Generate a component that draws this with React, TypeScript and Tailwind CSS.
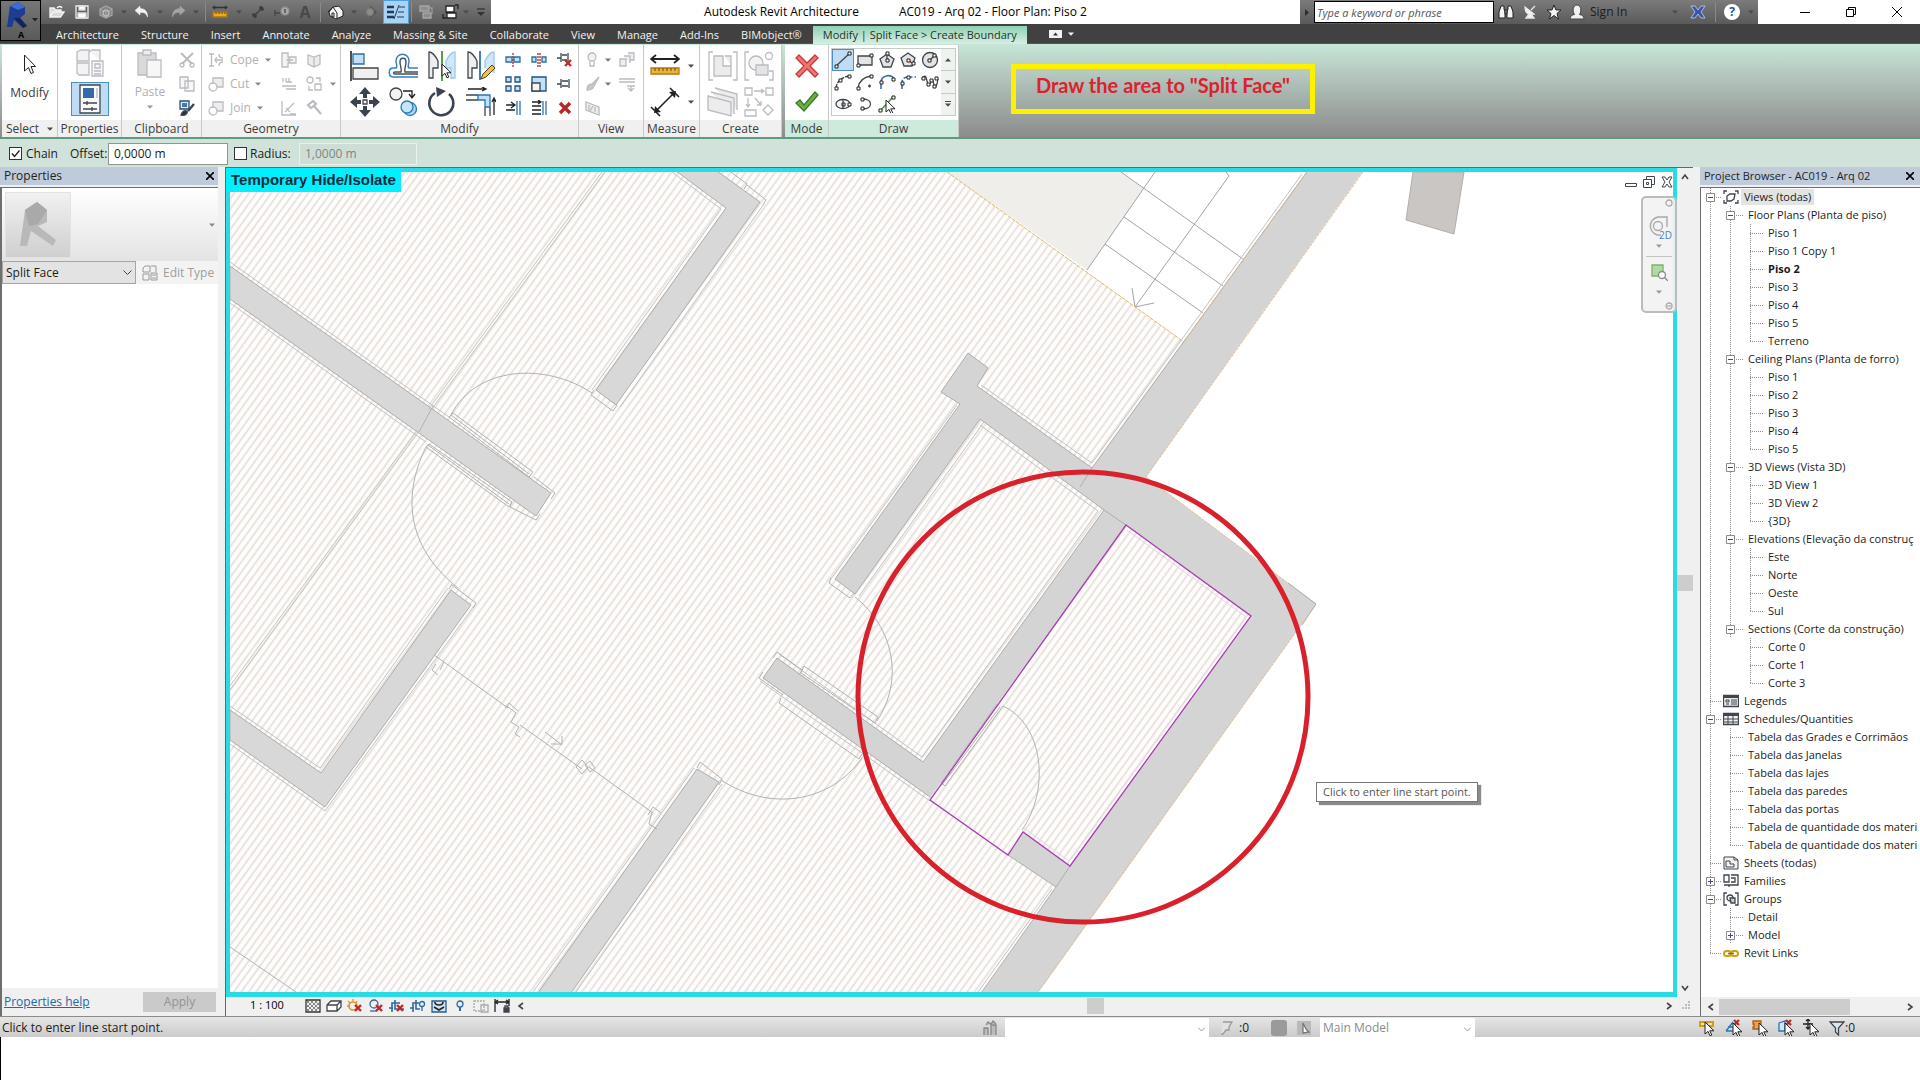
import type { ReactNode } from "react";

type IconProps = { w: number; h: number; children: ReactNode };

const Ico = ({ w, h, children }: IconProps) => (
  <svg width={w} height={h} viewBox={`0 0 ${w} ${h}`} fill="none" stroke="#3f4650" strokeWidth="1.3" className="shrink-0">
    {children}
  </svg>
);

const Caret = ({ color = "#4a4a4a" }: { color?: string }) => (
  <svg width="6" height="4" viewBox="0 0 6 4" className="shrink-0">
    <path d="M0 0.5h6L3 3.8z" fill={color} />
  </svg>
);

const RedX = ({ x, y, s }: { x: number; y: number; s: number }) => (
  <path d={`M${x} ${y}l${s} ${s}m0 ${-s}l${-s} ${s}`} stroke="#c02a2a" strokeWidth="2.4" />
);

const Cursor = ({ x, y }: { x: number; y: number }) => (
  <path transform={`translate(${x} ${y})`} d="M0 0v12l3-2.6 2 4.4 1.8-.8-2-4.2H9z" fill="#fff" stroke="#222" strokeWidth="1" />
);

// ---------- title bar ----------

const quickAccess: { name: string; width: string; icon: ReactNode; active?: boolean }[] = [
  {
    name: "Open",
    width: "w-6",
    icon: (
      <Ico w={16} h={14}>
        <path d="M1 12V3h4l1.500 2H12v2M1 12l3-5h11l-3.500 5z" fill="#d8d8d8" stroke="#f4f4f4" />
        <path d="M8 3c2-2 4-2 5 0" stroke="#fff" />
      </Ico>
    ),
  },
  {
    name: "Save",
    width: "w-[26px]",
    icon: (
      <Ico w={14} h={14}>
        <path d="M1 1h12v12H1z" fill="#5a5f68" stroke="#f0f0f0" />
        <path d="M4 1h6v4H4zM3 8h8v5H3z" fill="#fff" stroke="#ddd" />
      </Ico>
    ),
  },
  {
    name: "Synchronize",
    width: "w-[22px]",
    icon: (
      <Ico w={16} h={14}>
        <path d="M2 4l6-3 6 3v6l-6 3-6-3zM2 4l6 3 6-3M8 7v6" stroke="#a4a4a4" fill="#858585" />
        <circle cx="8" cy="8" r="3" stroke="#bbb" />
      </Ico>
    ),
  },
  { name: "Synchronize options", width: "w-[14px]", icon: <Caret /> },
  {
    name: "Undo",
    width: "w-[22px]",
    icon: (
      <Ico w={16} h={14}>
        <path d="M6 1L1 5.500 6 10V7.500c4-.5 6 .5 7.500 4.500C14 7 11 3.500 6 3.500z" fill="#f2f2f2" stroke="#f2f2f2" strokeWidth="0.5" />
      </Ico>
    ),
  },
  { name: "Undo list", width: "w-[14px]", icon: <Caret /> },
  {
    name: "Redo",
    width: "w-[22px]",
    icon: (
      <Ico w={16} h={14}>
        <path d="M10 1l5 4.500L10 10V7.500C6 7 4 8 2.500 12 2 7 5 3.500 10 3.500z" fill="#a5a5a5" stroke="#a5a5a5" strokeWidth="0.5" />
      </Ico>
    ),
  },
  { name: "Redo list", width: "w-[14px]", icon: <Caret /> },
  { name: "", width: "w-1", icon: null },
  {
    name: "Measure",
    width: "w-[26px]",
    icon: (
      <Ico w={16} h={14}>
        <path d="M1 2.500h14M3 1L1 2.500 3 4M13 1l2 1.500L13 4" stroke="#333" />
        <path d="M1 7h14v5H1z" fill="#e9a927" stroke="#a97412" />
        <path d="M4 7v2M7 7v2M10 7v2M13 7v2" stroke="#8a5d08" />
      </Ico>
    ),
  },
  { name: "Measure options", width: "w-3", icon: <Caret /> },
  {
    name: "Aligned Dimension",
    width: "w-[26px]",
    icon: (
      <Ico w={14} h={14}>
        <path d="M2 12L12 2M1 9l4 4M9 1l4 4M3 8v3h3M8 3h3v3" stroke="#3c3c3c" />
      </Ico>
    ),
  },
  {
    name: "Tag by Category",
    width: "w-[22px]",
    icon: (
      <Ico w={16} h={14}>
        <path d="M1 5v6M1 8h5" stroke="#444" />
        <circle cx="11" cy="6" r="4" fill="#a8a8a8" stroke="#8f8f8f" />
        <path d="M11 4v4" stroke="#444" />
      </Ico>
    ),
  },
  {
    name: "Text",
    width: "w-6",
    icon: <span className="text-[16px] font-bold leading-4 text-[#484848]">A</span>,
  },
  { name: "", width: "w-[6px]", icon: null },
  {
    name: "Default 3D View",
    width: "w-[26px]",
    icon: (
      <Ico w={16} h={15}>
        <path d="M1 7l4-5 6-1 4 5v5l-7 3-6-3z" fill="#f4f4f4" stroke="#222" strokeWidth="1" />
        <path d="M0 7l5-5 4 6v6M4 8h2v4H4z" stroke="#222" strokeWidth="1" />
      </Ico>
    ),
  },
  { name: "3D options", width: "w-[10px]", icon: <Caret /> },
  {
    name: "Section",
    width: "w-6",
    icon: (
      <Ico w={14} h={14}>
        <path d="M7 2l5 5-5 5z" fill="#555" stroke="#555" />
        <circle cx="6" cy="7" r="3.500" fill="#8c8c8c" stroke="#7b7b7b" />
      </Ico>
    ),
  },
  {
    name: "Thin Lines",
    width: "w-[26px]",
    active: true,
    icon: (
      <Ico w={18} h={16}>
        <path d="M0 3h7M0 8h7M0 13h7" stroke="#223a55" strokeWidth="2.400" />
        <path d="M7 15L12 1M12 3h6M11 8h6M10 13h7" stroke="#223a55" strokeWidth="1" />
      </Ico>
    ),
  },
  { name: "", width: "w-1", icon: null },
  {
    name: "Close Hidden Windows",
    width: "w-[26px]",
    icon: (
      <Ico w={14} h={14}>
        <path d="M1 1h9v5H1zM4 8h8v5H4z" fill="#8d8d8d" stroke="#a8a8a8" />
        <path d="M8 3h5v6" stroke="#9c9c9c" />
      </Ico>
    ),
  },
  {
    name: "Switch Windows",
    width: "w-[22px]",
    icon: (
      <Ico w={17} h={16}>
        <path d="M4 2h8v6H4zM5 9h9v5H5z" fill="#fff" stroke="#222" />
        <path d="M1 10v4h3M13 1h3v4" stroke="#222" />
      </Ico>
    ),
  },
  { name: "Switch options", width: "w-[10px]", icon: <Caret /> },
  {
    name: "Customize Quick Access Toolbar",
    width: "w-5",
    icon: (
      <Ico w={8} h={8}>
        <path d="M0 1h8" stroke="#333" />
        <path d="M0 4h8L4 8z" fill="#333" stroke="none" />
      </Ico>
    ),
  },
];

function TitleBar() {
  return (
    <header className="flex h-6 shrink-0 bg-white text-[12px]">
      <div className="flex items-center bg-linear-to-b from-[#7b7b7b] to-[#5a5a5a] pl-[45px]">
        {quickAccess.map((q, i) =>
          q.icon ? (
            <button
              key={i}
              aria-label={q.name}
              className={`${q.width} flex h-6 items-center justify-center ${q.active ? "border border-[#4fa0dc] bg-[#a9d3f5]" : ""}`}
            >
              {q.icon}
            </button>
          ) : (
            <span key={i} className={`${q.width} flex h-5 justify-center`}>
              <span className="w-px bg-[#8a8a8a]" />
            </span>
          )
        )}
      </div>

      <div className="flex flex-1 items-center justify-center gap-10 whitespace-nowrap text-black">
        <span>Autodesk Revit Architecture</span>
        <span>AC019 - Arq 02 - Floor Plan: Piso 2</span>
      </div>

      <div className="flex w-[458px] items-center bg-linear-to-b from-[#7b7b7b] to-[#5a5a5a]">
        <button aria-label="Collapse search" className="flex w-[14px] justify-center">
          <svg width="4" height="7" viewBox="0 0 4 7"><path d="M0 0l4 3.500L0 7z" fill="#2c2c2c" /></svg>
        </button>
        <input
          aria-label="Search"
          placeholder="Type a keyword or phrase"
          className="h-[22px] w-[180px] border border-black bg-white px-[2px] text-[11px] italic placeholder:text-[#555]"
        />
        <button aria-label="Find" className="flex w-6 justify-center">
          <Ico w={16} h={16}>
            <path d="M3 2h3v3l1 3v6H1V8zM13 2h-3v3L9 8v6h6V8zM7 6h2v4H7z" fill="#f4f4f4" stroke="#222" strokeWidth="1" />
          </Ico>
        </button>
        <button aria-label="Communication Center" className="flex w-6 justify-center">
          <Ico w={14} h={16}>
            <path d="M2 3c0 6 3 8 9 7zM6 10l-3 4h8l-3-4M8 6l4-4" fill="#f4f4f4" stroke="#e8e8e8" />
          </Ico>
        </button>
        <button aria-label="Favorites" className="flex w-6 justify-center">
          <Ico w={16} h={16}>
            <path d="M8 1l2 5h5l-4 3.500L12.500 15 8 11.500 3.500 15 5 9.500 1 6h5z" fill="#f4f4f4" stroke="#222" strokeWidth="1" />
          </Ico>
        </button>
        <button className="flex items-center gap-[5px] pl-[3px] text-[#1c1c1c]">
          <Ico w={16} h={16}>
            <path d="M1 15c0-3 2-4 4.500-4.500C3 7 4 1 8 1s5 6 2.500 9.500C13 11 15 12 15 15z" fill="#f0f0f0" stroke="#444" strokeWidth="1" />
          </Ico>
          Sign In
        </button>
        <span className="flex flex-1 justify-end pr-2"><Caret /></span>
        <button aria-label="Exchange Apps" className="flex w-6 justify-center">
          <Ico w={16} h={14}>
            <path d="M1 1h4l3 4 3-4h4l-4 6 4 6h-4L8 9l-3 4H1l4-6z" fill="#3a55a8" stroke="#c5d3f3" strokeWidth="0.800" />
          </Ico>
        </button>
        <span className="ml-[5px] h-5 w-px bg-[#8a8a8a]" />
        <button aria-label="Help" className="flex w-8 justify-center">
          <span className="flex h-4 w-4 items-center justify-center rounded-full bg-white text-[12px] font-bold text-[#27509c]">?</span>
        </button>
        <span className="pr-1"><Caret /></span>
      </div>

      <div className="flex pl-[24px]">
        <button aria-label="Minimize" className="flex w-[46px] items-center justify-center">
          <Ico w={10} h={10}><path d="M0 5.500h10" stroke="#000" strokeWidth="1" /></Ico>
        </button>
        <button aria-label="Restore" className="flex w-[46px] items-center justify-center">
          <Ico w={10} h={10}><path d="M0.500 2.500h7v7h-7zM2.500 2.500v-2h7v7h-2" stroke="#000" strokeWidth="1" /></Ico>
        </button>
        <button aria-label="Close" className="flex w-[46px] items-center justify-center">
          <Ico w={10} h={10}><path d="M0 0l10 10M10 0L0 10" stroke="#000" strokeWidth="1" /></Ico>
        </button>
      </div>
    </header>
  );
}

const tabs = ["Architecture", "Structure", "Insert", "Annotate", "Analyze", "Massing & Site", "Collaborate", "View", "Manage", "Add-Ins", "BIMobject®"];

function TabBar() {
  return (
    <nav className="flex h-5 shrink-0 items-stretch border-b border-[#2f6b4f] bg-[#414141] pl-[45px] text-[11px] text-[#f2f2f2]">
      {tabs.map((t) => (
        <button key={t} className="whitespace-nowrap px-[11px] pt-[2px] leading-4">{t}</button>
      ))}
      <button className="mt-[2px] -mb-px whitespace-nowrap bg-linear-to-b from-[#8fd0b2] to-[#d7efe4] px-[10px] leading-4 text-[#24332c]">
        Modify | Split Face &gt; Create Boundary
      </button>
      <button aria-label="Minimize ribbon" className="ml-[22px] flex items-center gap-[6px]">
        <Ico w={13} h={8}>
          <path d="M0.500 0.500h12v7h-12z" fill="#f2f2f2" stroke="#f2f2f2" />
          <path d="M4 5.500h5L6.500 2.500z" fill="#333" stroke="none" />
        </Ico>
        <Caret color="#f2f2f2" />
      </button>
    </nav>
  );
}

function AppMenu() {
  return (
    <button aria-label="Application menu" className="absolute left-0 top-0 flex h-[41px] w-[41px] flex-col border border-black bg-linear-to-b from-[#777] to-[#5a5a5a] pl-[4px]">
      <svg width="34" height="28" viewBox="0 0 34 28" className="shrink-0">
        <path d="M2 26L5 5l8-4 7 5v7l-5 4 7 8-4 2-9-8-2 7z" fill="#1d3c92" />
        <path d="M5 5l8-4 7 5-7 3z" fill="#3f6cd0" />
        <path d="M9 17l6 0 7 8-4 2z" fill="#10245f" />
        <path d="M27 17h6l-3 3.500z" fill="#222" />
      </svg>
      <span className="w-8 text-center text-[9px] font-bold leading-[11px] text-black">A</span>
    </button>
  );
}

// ---------- ribbon ----------

const G = "#b9bcc0";

function Panel({ title, width, green, caret, children }: { title: string; width: string; green?: boolean; caret?: boolean; children: ReactNode }) {
  return (
    <section className={`${width} flex shrink-0 flex-col border-r border-[#c6c9c8] bg-white`}>
      <div className="flex-1 px-1 pt-[3px]">{children}</div>
      <h2 className={`flex h-[17px] shrink-0 items-center justify-center gap-2 whitespace-nowrap text-[12px] text-[#3c3c3c] ${green ? "bg-[#cdeadd]" : "bg-[#f0f0f0]"}`}>
        {title}
        {caret && <Caret />}
      </h2>
    </section>
  );
}

function Tool({ name, size, active, children }: { name: string; size: string; active?: boolean; children: ReactNode }) {
  return (
    <button aria-label={name} className={`${size} flex items-center justify-center ${active ? "border border-[#4b8fc4] bg-[#bfdcf4]" : ""}`}>
      {children}
    </button>
  );
}

const CutIcon = (
  <Ico w={16} h={15}>
    <path d="M5 1h10v9H5z" fill="#ededed" stroke={G} />
    <circle cx="5" cy="10" r="4" fill="#fff" stroke={G} />
  </Ico>
);

const geometryRows = [
  {
    name: "Cope",
    icon: (
      <Ico w={16} h={14}>
        <path d="M1 1h5M1 13h5M3.500 1v12M7 7h8M9 4L7 7l2 3M11 1c0 3 1 4 4 4M11 13c0-3 1-4 4-4" stroke={G} />
      </Ico>
    ),
  },
  { name: "Cut", icon: CutIcon },
  { name: "Join", icon: CutIcon },
];

const geometrySide = [
  <path d="M1 1h6v4h8v6H7v4H1zM6 8h6M9 6L6 8l3 2" fill="#f3f3f3" stroke={G} />,
  <path d="M2 3l6 2 6-2v9l-6 3-6-3zM8 5v10" fill="#ececec" stroke={G} />,
  <path d="M2 2v4M5 2v4M8 2v4M5 6h6M1 10h14M5 13h10" stroke={G} />,
  <><circle cx="4" cy="4" r="3" stroke={G} /><path d="M9 8h6v6H9zM10 2h4v4M3 10v4h4" stroke={G} /></>,
  <path d="M1 1v14h14M4 12l9-9M5 8l4 4M9 14h6" stroke={G} />,
  <path d="M2 5l5-4 3 3-5 4zM8 6l7 8" stroke={G} strokeWidth="2.200" />,
];

const modifyBig = [
  {
    name: "Align",
    icon: (
      <Ico w={30} h={30}>
        <path d="M1 0v30" stroke="#222" strokeWidth="1.600" />
        <path d="M3 3h11v10H3z" fill="#bfe2fa" stroke="#2a6da6" />
        <path d="M3 17h25v11H3z" fill="#f0f0f0" stroke="#444" />
      </Ico>
    ),
  },
  {
    name: "Offset",
    icon: (
      <Ico w={30} h={30}>
        <path d="M30 17h-9c-2-1 0-4 0-7 0-9-13-9-13 0 0 3 2 6 0 7H5c-5 0-5 9 0 9h25" stroke="#2f7fc2" strokeWidth="1.400" />
        <path d="M30 21H17c-1-3 1-6 1-10 0-5-6-5-6 0 0 4 2 7 1 10H7c-2 0-2 2 0 2h23" stroke="#4a5058" strokeWidth="1.400" />
      </Ico>
    ),
  },
  {
    name: "Mirror - Pick Axis",
    icon: (
      <Ico w={30} h={30}>
        <path d="M2 27V1c4 0 7 5 9 9v7H6v10z" fill="#eee" />
        <path d="M28 27V1c-4 0-7 5-9 9v7h5v10z" fill="#cfe8fa" stroke="#9cc8e8" />
        <path d="M15 0v30" stroke="#3b9a35" strokeWidth="1.800" />
        <Cursor x={15} y={13} />
      </Ico>
    ),
  },
  {
    name: "Mirror - Draw Axis",
    icon: (
      <Ico w={30} h={30}>
        <path d="M2 27V1c4 0 7 5 9 9v7H6v10z" fill="#eee" />
        <path d="M28 22V1c-4 0-7 5-9 9v7" fill="#cfe8fa" stroke="#9cc8e8" />
        <path d="M14 0v29" stroke="#2b73b5" strokeWidth="1.800" />
        <path d="M15 28l2-5 9-9 3 3-9 9z" fill="#f0c14a" stroke="#54421a" strokeWidth="1" />
      </Ico>
    ),
  },
  {
    name: "Move",
    icon: (
      <Ico w={30} h={30}>
        <path d="M15 0l6 7h-4v4h-4V7H9zM15 30l6-7h-4v-4h-4v4H9zM0 15l7-6v4h4v4H7v4zM30 15l-7-6v4h-4v4h4v4z" fill="#3c4350" stroke="none" />
        <path d="M13 13h4v4h-4z" />
      </Ico>
    ),
  },
  {
    name: "Copy",
    icon: (
      <Ico w={30} h={30}>
        <circle cx="8" cy="7" r="6" fill="#f3f3f3" />
        <circle cx="22" cy="22" r="6.500" fill="#a9d7f6" stroke="#2d7bb8" />
        <circle cx="19" cy="20" r="6" fill="#c5e5fa" stroke="#2d7bb8" />
        <path d="M15 4h9v6M21 7l3 4 3-4" stroke="#222" />
      </Ico>
    ),
  },
  {
    name: "Rotate",
    icon: (
      <Ico w={30} h={30}>
        <path d="M22 7a12 12 0 1 1-14-1" stroke="#3c4350" strokeWidth="2.600" />
        <path d="M9 0l10 4-9 6z" fill="#3c4350" stroke="none" />
      </Ico>
    ),
  },
  {
    name: "Trim/Extend to Corner",
    icon: (
      <Ico w={30} h={30}>
        <path d="M0 8h12M0 13h12M19 20v9M24 20v9" stroke="#3c4350" />
        <path d="M12 8h12v12h-5v-7h-7z" stroke="#2b73b5" fill="#bfe2fa" />
        <path d="M2 2h17M16 0l4 2-4 2M28 28V12M26 15l2-4 2 4" stroke="#222" />
      </Ico>
    ),
  },
];

const modifySmall = [
  { name: "Split Element", icon: <><path d="M1 5h6v5H1zM9 5h6v5H9z" fill="#bfe2fa" stroke="#2a6da6" /><path d="M8 1v14" stroke="#b02a2a" strokeDasharray="2 1" /></> },
  { name: "Split with Gap", icon: <><path d="M1 5h4v5H1zM11 5h4v5h-4z" fill="#bfe2fa" stroke="#2a6da6" /><path d="M7 1v14M9 1v14" stroke="#b02a2a" strokeDasharray="2 1" /></> },
  { name: "Unpin", icon: <><path d="M0 6h4M4 1v9M5 3h5M5 8h5M11 1v9" /><RedX x={8} y={8} s={6} /></> },
  { name: "Array", icon: <path d="M1 1h5v5H1zM10 1h5v5h-5zM1 10h5v5H1zM10 10h5v5h-5z" fill="#bfe2fa" stroke="#24527c" /> },
  { name: "Scale", icon: <><path d="M1 1h14v14H1z" fill="#bfe2fa" stroke="#24527c" /><path d="M1 7h8v8H1z" fill="#f5f5f5" /></> },
  { name: "Pin", icon: <path d="M0 8h4M4 3v9M5 5h6M5 10h6M12 3v9" /> },
  { name: "Trim/Extend Single", icon: <><path d="M1 5h8M6 2l4 3-4 3M1 10h9" stroke="#222" /><path d="M12 1v14M15 1v14" stroke="#2b73b5" /></> },
  { name: "Trim/Extend Multiple", icon: <><path d="M1 2h8M7 0l3 2-3 2M1 6h9M1 10h9M1 14h9" stroke="#222" /><path d="M12 1v14M15 1v14" stroke="#2b73b5" /></> },
  { name: "Delete", icon: <path d="M3 3l10 10M13 3L3 13" stroke="#b82626" strokeWidth="3.400" /> },
];

const viewTools = [
  <><circle cx="7" cy="5" r="4" fill="#f2f2f2" stroke={G} /><path d="M5 9v5h4V9" stroke={G} /></>,
  <path d="M1 7h6v7H1zM5 4h6v7M9 1h6v7h-4" fill="#eee" stroke={G} />,
  <path d="M2 14c0-4 2-6 5-6l7-7-5 9c-1 3-4 4-7 4z" fill="#c9c9c9" stroke={G} />,
  <path d="M0 3h16M0 6h16M8 10h8M12 10v5M9 12l3 3 3-3" stroke={G} />,
  <path d="M1 2l13 5v8L1 10zM4 5v5M8 6l-3 5M10 7v5" fill="#ededed" stroke={G} />,
];

const Sq = ({ x, y }: { x: number; y: number }) => <path d={`M${x - 1} ${y - 1}h3v3h-3z`} fill="#fff" stroke="#222" strokeWidth="1" />;

const drawTools = [
  { name: "Line", icon: <><path d="M2 15L16 2" /><Sq x={2} y={15} /><Sq x={15} y={2} /></> },
  { name: "Rectangle", icon: <><path d="M2 5h14v9H2z" fill="#e4e4e4" /><Sq x={2} y={14} /><Sq x={15} y={4} /></> },
  { name: "Inscribed Polygon", icon: <><path d="M9 3l7 5-3 8H5L2 8z" fill="#e4e4e4" /><path d="M9 3v7" /><Sq x={9} y={2} /><Sq x={9} y={9} /></> },
  { name: "Circumscribed Polygon", icon: <><path d="M9 2l7 5-3 8H5L2 7z" fill="#e4e4e4" /><path d="M9 9l4 3" stroke="#b02a2a" /><Sq x={9} y={9} /><Sq x={14} y={12} /></> },
  { name: "Circle", icon: <><circle cx="9" cy="9" r="7.500" fill="#e4e4e4" /><path d="M9 9l4-4" /><Sq x={8} y={9} /><Sq x={13} y={4} /></> },
  { name: "Start-End-Radius Arc", icon: <><path d="M2 15C3 8 8 4 15 3" strokeDasharray="4 1" /><Sq x={2} y={15} /><Sq x={6} y={7} /><Sq x={15} y={3} /></> },
  { name: "Center-ends Arc", icon: <><path d="M2 15C3 8 8 4 15 3" /><Sq x={2} y={15} /><Sq x={15} y={3} /><path d="M12 13h3M13.500 11.500v3" /></> },
  { name: "Tangent End Arc", icon: <><path d="M3 16v-6C3 1 15 1 16 6" stroke="#2b73b5" strokeWidth="1.600" /><Sq x={3} y={9} /><Sq x={15} y={6} /></> },
  { name: "Fillet Arc", icon: <><path d="M3 16v-6c0-4 2-6 6-6h8" stroke="#2b73b5" strokeWidth="1.600" strokeDasharray="9 2" /><Sq x={3} y={10} /><Sq x={9} y={4} /></> },
  { name: "Spline", icon: <><path d="M1 6c3-5 4-3 5 2s2 5 4 1 2-1 3 3 3 1 4-6" /><Sq x={2} y={5} /><Sq x={7} y={11} /><Sq x={10} y={7} /><Sq x={13} y={13} /><Sq x={15} y={5} /></> },
  { name: "Ellipse", icon: <><ellipse cx="9" cy="9" rx="7" ry="4.500" fill="#f2f2f2" /><Sq x={9} y={9} /><Sq x={15} y={9} /><path d="M9 4v10" /></> },
  { name: "Partial Ellipse", icon: <><path d="M7 4c10 0 10 10 0 10" /><Sq x={6} y={4} /><Sq x={6} y={13} /></> },
  { name: "Pick Lines", icon: <><path d="M2 16L15 2" stroke="#3b9a35" strokeWidth="1.600" /><Sq x={2} y={15} /><Sq x={15} y={2} /><Cursor x={8} y={5} /></> },
];

function Ribbon() {
  return (
    <div className="flex h-[95px] shrink-0 border-b-2 border-[#5f9a80] bg-linear-to-b from-[#c8e6d8] to-[#8c8c8c] pl-[2px] pt-px text-[12px]">
      <Panel title="Select" width="w-14" caret>
        <button className="flex w-full flex-col items-center gap-2 pt-[6px] text-[#3a3a3a]">
          <svg width="14" height="22" viewBox="0 0 14 22" fill="#fff" stroke="#222">
            <path d="M1.500 1v16l4-3.500 2.500 6 2.500-1-2.500-6h4.500z" />
          </svg>
          Modify
        </button>
      </Panel>

      <Panel title="Properties" width="w-16">
        <div className="flex flex-col items-center gap-1">
          <Tool name="Type Properties" size="h-[30px] w-[38px]">
            <Ico w={30} h={28}>
              <path d="M2 3l4-2h8v11H2zM14 3l3-2h8v10M2 14h12v12H4l-2-2z" fill="#f3f3f3" stroke={G} />
              <path d="M17 12h11v15H17zM20 15h5v4h-5zM19 22h7M19 25h7" fill="#f7f7f7" stroke={G} />
            </Ico>
          </Tool>
          <Tool name="Properties" size="h-[34px] w-[38px]" active>
            <Ico w={22} h={30}>
              <path d="M1 1h20v28H1z" fill="#f8f8f8" />
              <path d="M4 4h11v10H4z" fill="#3569ae" stroke="none" />
              <path d="M18 4v10" stroke="#bbb" />
              <path d="M4 19h14M8 17v4M4 25h14M13 23v4" />
            </Ico>
          </Tool>
        </div>
      </Panel>

      <Panel title="Clipboard" width="w-20">
        <div className="flex justify-between">
          <button className="flex w-12 flex-col items-center gap-1 pt-px text-[#b0b0b0]">
            <Ico w={28} h={30}>
              <path d="M2 4h18v22H2z" fill="#d9d9d9" stroke={G} />
              <path d="M7 1h8v5H7z" fill="#eee" stroke={G} />
              <path d="M11 11h14v17H11z" fill="#f7f7f7" stroke={G} />
            </Ico>
            Paste
            <Caret color="#999" />
          </button>
          <div className="flex flex-col">
            <Tool name="Cut" size="h-6 w-5"><Ico w={16} h={16}><path d="M2 1l11 11M14 1L3 12" stroke={G} strokeWidth="2" /><circle cx="3" cy="13" r="2" stroke={G} /><circle cx="13" cy="13" r="2" stroke={G} /></Ico></Tool>
            <Tool name="Copy to Clipboard" size="h-6 w-5"><Ico w={16} h={16}><path d="M1 1h8v11H1zM6 5h9v10H6z" fill="#f6f6f6" stroke={G} /></Ico></Tool>
            <Tool name="Match Type" size="h-6 w-5"><Ico w={16} h={16}><path d="M1 1h9v8H1z" fill="#d6eafa" stroke="#24527c" /><path d="M3 4h5M3 6h5" stroke="#24527c" /><path d="M15 4l-6 7" strokeWidth="2.400" /><path d="M2 15c1-3 3-5 6-4 1 3-2 5-6 4z" fill="#333" /></Ico></Tool>
          </div>
        </div>
      </Panel>

      <Panel title="Geometry" width="w-[139px]">
        <div className="flex pl-[2px]">
          <div className="flex w-[68px] flex-col">
            {geometryRows.map((g) => (
              <button key={g.name} className="flex h-6 items-center gap-[6px] text-[12px] text-[#b0b0b0]">
                {g.icon}
                {g.name}
                <Caret color="#888" />
              </button>
            ))}
          </div>
          <div className="grid grid-cols-2">
            {geometrySide.map((p, i) => (
              <Tool key={i} name={`Geometry tool ${i + 1}`} size="h-6 w-[25px]"><Ico w={16} h={16}>{p}</Ico></Tool>
            ))}
          </div>
          <span className="flex items-center pl-1"><Caret color="#888" /></span>
        </div>
      </Panel>

      <Panel title="Modify" width="w-[238px]">
        <div className="-mr-1 flex">
          <div className="grid grid-cols-4">
            {modifyBig.map((m) => (
              <Tool key={m.name} name={m.name} size="h-9 w-[39px]">{m.icon}</Tool>
            ))}
          </div>
          <div className="grid grid-cols-3">
            {modifySmall.map((m) => (
              <Tool key={m.name} name={m.name} size="h-6 w-[26px]"><Ico w={16} h={16}>{m.icon}</Ico></Tool>
            ))}
          </div>
        </div>
      </Panel>

      <Panel title="View" width="w-[65px]">
        <div className="grid grid-cols-[34px_20px] pl-[2px]">
          {viewTools.map((p, i) => (
            <button key={i} aria-label={`View tool ${i + 1}`} className="flex h-6 items-center gap-1">
              <Ico w={16} h={16}>{p}</Ico>
              {(i === 0 || i === 2) && <Caret color="#777" />}
            </button>
          ))}
        </div>
      </Panel>

      <Panel title="Measure" width="w-14">
        <button aria-label="Measure Between" className="flex h-9 items-center gap-2 pl-[2px]">
          <Ico w={30} h={24}>
            <path d="M1 5h28M6 1L1 5l5 4M24 1l5 4-5 4" stroke="#222" strokeWidth="1.800" />
            <path d="M1 14h28v6H1z" fill="#efb33a" stroke="#b07a12" />
            <path d="M5 14v3M9 14v3M13 14v3M17 14v3M21 14v3M25 14v3" stroke="#8a5d08" />
          </Ico>
          <Caret />
        </button>
        <button aria-label="Aligned Dimension" className="flex h-9 items-center gap-2 pl-[2px]">
          <Ico w={30} h={30}>
            <path d="M5 25L25 5M1 20l9 9M20 1l9 9" stroke="#222" strokeWidth="1.600" />
            <path d="M4 26l1-7 6 6zM26 4l-7 1 6 6z" fill="#222" stroke="none" />
          </Ico>
          <Caret />
        </button>
      </Panel>

      <Panel title="Create" width="w-[82px]">
        <div className="grid grid-cols-2">
          <Tool name="Create Assembly" size="h-9 w-[37px]"><Ico w={30} h={30}><path d="M5 1H1v28h4M25 1h4v28h-4" stroke={G} /><path d="M6 5h9v10h8v10H6zM17 5h6v10" fill="#ececec" stroke={G} /></Ico></Tool>
          <Tool name="Create Group" size="h-9 w-[37px]"><Ico w={30} h={30}><path d="M5 1H1v28h4M25 20h4v9h-4" stroke={G} /><circle cx="12" cy="12" r="7" fill="#f3f3f3" stroke={G} /><path d="M12 14h12v10H12z" fill="#e4e4e4" stroke={G} /><circle cx="25" cy="5" r="3.500" stroke={G} /></Ico></Tool>
          <Tool name="Create Parts" size="h-9 w-[37px]"><Ico w={32} h={30}><path d="M8 1l22 6v16M4 5l23 6v16M1 9l23 6v14L1 23z" fill="#ececec" stroke={G} /></Ico></Tool>
          <Tool name="Create Similar" size="h-9 w-[37px]"><Ico w={30} h={30}><path d="M1 1h7v7H1zM22 1h7v7h-7zM1 23h11v6H1zM24 18l5 5-5 5-5-5zM10 4h10M17 2l3 2-3 2M4 11v9M2 17l2 3 2-3M11 11l6 7M17 14v4h-4" stroke={G} /></Ico></Tool>
        </div>
      </Panel>

      <Panel title="Mode" width="ml-[3px] w-11" green>
        <div className="flex flex-col items-center">
          <Tool name="Cancel Edit Mode" size="h-9 w-9">
            <Ico w={24} h={24}><path d="M4 1l8 8 8-8 3 3-8 8 8 8-3 3-8-8-8 8-3-3 8-8-8-8z" fill="#f27470" stroke="#c23b37" /></Ico>
          </Tool>
          <Tool name="Finish Edit Mode" size="h-9 w-9">
            <Ico w={24} h={22}><path d="M1 12l4-3 4 5L20 1l3 3L9 20z" fill="#69b045" stroke="#3c7a22" /></Ico>
          </Tool>
        </div>
      </Panel>

      <Panel title="Draw" width="w-[130px]" green>
        <div className="-mx-[2px] flex border border-[#c4ccc8]">
          <div className="grid flex-1 grid-cols-5">
            {drawTools.map((d, i) => (
              <Tool key={d.name} name={d.name} size="h-[22px] w-[22px]" active={i === 0}><Ico w={18} h={18}>{d.icon}</Ico></Tool>
            ))}
          </div>
          <div className="flex w-[14px] flex-col bg-[#eef3f0]">
            <button aria-label="Scroll up" className="flex flex-1 items-center justify-center border-b border-[#c4ccc8]"><span className="rotate-180"><Caret /></span></button>
            <button aria-label="Scroll down" className="flex flex-1 items-center justify-center border-b border-[#c4ccc8]"><Caret /></button>
            <button aria-label="More" className="flex flex-1 flex-col items-center justify-center gap-px"><span className="h-px w-[6px] bg-[#4a4a4a]" /><Caret /></button>
          </div>
        </div>
      </Panel>

      <p className="ml-[52px] mt-[19px] flex h-[50px] w-[304px] items-center justify-center border-[5px] border-[#fdf100] pb-2 font-[Lato] text-[20px] font-bold leading-5 text-[#d9232e]">
        Draw the area to "Split Face"
      </p>
    </div>
  );
}

function OptionsBar() {
  return (
    <form className="flex h-7 shrink-0 items-center border-t border-[#b6f0d4] bg-[#d0e2da] pl-[9px] text-[12px] text-[#1c1c1c]">
      <span className="relative flex">
        <input id="chain" type="checkbox" defaultChecked className="peer h-[13px] w-[13px] appearance-none border border-[#333] bg-white" />
        <svg width="13" height="13" viewBox="0 0 13 13" className="pointer-events-none absolute hidden peer-checked:block" fill="none" stroke="#222" strokeWidth="1.300">
          <path d="M3 6.500l2.500 3 5-6" />
        </svg>
      </span>
      <label htmlFor="chain" className="w-11 pl-1">Chain</label>
      <label htmlFor="offset" className="w-[42px] pl-1">Offset:</label>
      <input id="offset" defaultValue="0,0000 m" className="h-[22px] w-[120px] border border-[#8d9692] bg-white px-[5px]" />
      <input id="radius" type="checkbox" className="ml-[6px] h-[13px] w-[13px] appearance-none border border-[#333] bg-white" />
      <label htmlFor="radius" className="w-[52px] pl-[3px]">Radius:</label>
      <input aria-label="Radius value" disabled defaultValue="1,0000 m" className="h-[22px] w-[118px] border border-[#e8f1ed] bg-[#cfddd7] px-[5px] text-[#7d8783]" />
    </form>
  );
}

// ---------- properties palette ----------

function Properties() {
  return (
    <aside className="flex w-[218px] shrink-0 flex-col text-[12px]">
      <h2 className="flex h-[18px] items-center justify-between bg-[#bfcbda] pl-1 pr-1 text-[#222]">
        Properties
        <button aria-label="Close properties"><Ico w={8} h={8}><path d="M0 0l8 8M8 0L0 8" stroke="#000" strokeWidth="1.600" /></Ico></button>
      </h2>
      <div className="mt-[2px] flex flex-1 flex-col border-l-2 border-t border-[#6e6e6e] bg-white">
        <div className="flex h-[73px] items-center justify-between bg-linear-to-b from-white to-[#e4e4e4] pl-[3px] pr-[3px]">
          <div className="flex h-[66px] w-[66px] items-center justify-center border border-[#e2e2e2] bg-linear-to-b from-[#f1f1f1] to-[#cfcfcf]">
            <svg width="44" height="50" viewBox="0 0 44 50">
              <path d="M4 46l5-36L21 2l10 8v12l-9 4 18 14-3 6-22-15-4 15z" fill="#b9b9b9" />
              <path d="M9 10L21 2l10 8-9 14-9 2z" fill="#a9a9a9" />
            </svg>
          </div>
          <Caret color="#8a8a8a" />
        </div>
        <div className="flex h-[23px] bg-[#f3f3f3]">
          <div className="relative w-[134px]">
            <select aria-label="Type" className="h-full w-full appearance-none border border-[#a5a5a5] bg-[#e3e3e3] pl-[3px] text-[#1b1b1b]">
              <option>Split Face</option>
            </select>
            <svg width="9" height="6" viewBox="0 0 9 6" className="pointer-events-none absolute right-[4px] top-[9px]" fill="none" stroke="#444"><path d="M0.500 0.500l4 4 4-4" /></svg>
          </div>
          <button className="flex items-center gap-[5px] pl-[6px] text-[#9e9e9e]">
            <Ico w={16} h={16}><path d="M1 3l2-2h5v6H1zM1 9h6v6H1zM9 1h5v6M9 8h6v7H9zM10 10h4M10 13h4" stroke="#999" strokeWidth="1" /></Ico>
            Edit Type
          </button>
        </div>
        <div className="flex-1" />
        <div className="flex h-7 items-center justify-between bg-[#f0f0f0] pl-[2px] pr-[2px]">
          <a href="#help" className="text-[#2466a8] underline">Properties help</a>
          <button disabled className="h-5 w-[73px] bg-[#cacaca] text-[#929292]">Apply</button>
        </div>
      </div>
    </aside>
  );
}

// ---------- drawing area ----------

function FloorPlan() {
  return (
    <svg className="block h-full w-full" viewBox="230 172 1444 820" preserveAspectRatio="xMinYMin slice">
      <defs>
        <pattern id="hatch" width="6" height="40" patternUnits="userSpaceOnUse" patternTransform="rotate(35.900)">
          <path d="M3 0v40" stroke="#d6cbc6" strokeWidth="1" />
        </pattern>
      </defs>
      <rect x="230" y="172" width="1444" height="820" fill="#fff" />

      {/* hatched slab */}
      <path d="M230 172H947L1184 342L1100 460L1290 600L1060 880L982 992H230z" fill="#fefdfb" />
      <path d="M230 172H947L1184 342L1100 460L1290 600L1060 880L982 992H230z" fill="url(#hatch)" />

      {/* stair */}
      <path d="M947 172H1121L1144 188L1087 270z" fill="#efeeeb" />
      <g fill="none" stroke="#a3a3ab">
        <path d="M1155 172L1087 270M1121 172l122 87M1124 217l99 69M1105 244l98 69M1226 172l3 4L1135 307M1132 288l3 19 19-4" />
      </g>
      <path d="M947 172L1184 342" stroke="#dcb96a" strokeDasharray="4 1" />

      {/* walls */}
      <g fill="#d8d8d8" stroke="#adadad">
        <path d="M230 266L551 493L536 516L230 299z" />
        <path d="M676 171L726 208L596 390L616 405L760 202L717 171z" />
        <path d="M230 710L321 773L451 590L471 605L325 807L230 740z" />
        <path d="M697 769L719 782L571 993H538z" />
      </g>
      <path
        d="M835 579L960 404L941 392L968 353L988 368L977 386L1092 468L1307 171H1363L1146 477L1316 604L1038 993H982L1056 887L1008 855L1023 832L1070 866L1251 616L1126 525L930 797L763 678L777 658L923 762L1104 510L980 419L855 594z"
        fill="#d4d4d4"
      />
      <path d="M1307 172L1092 468L977 386L988 368L968 353L941 392L960 404L835 579L855 594L980 419L1104 510L923 762L777 658L763 678L930 797M1008 855L1056 887L982 992M1092 468L1080 487M1104 510L1126 525M1056 887L1070 866" fill="none" stroke="#adadad" />
      <path d="M1363 172L1146 477L1316 604L1038 992M1307 172L1184 342" fill="none" stroke="#e3bd94" strokeDasharray="3 1" />
      <path d="M1288 583L1316 604L1302 625" fill="none" stroke="#b3aca8" />
      <path d="M1413 172L1406 220L1454 234L1464 172z" fill="#cac6c3" stroke="#b2adaa" />

      {/* wall finish offsets */}
      <g fill="none" stroke="#c2c2c2">
        <path d="M230 262L449 417M230 303L426 442M672 172L721 209L592 390M764 204L620 407M230 706L320 768L448 588M474 606L325 811L230 744M694 768L533 992M722 784L576 992" />
        <path d="M981 385L1092 463L1302 174M957 405L831 579M980 425L1098 511L922 757L779 654M930 801L760 681M1052 889L978 992M984 422L859 596" />
      </g>

      {/* doors and trims */}
      <g fill="none" stroke="#b2b2b2">
        <path d="M605 172L431 410M420 430L230 690M602 172L428 410M417 430L230 686" stroke="#c6c4be" />
        <path d="M433 406L419 432" />
        <path d="M451 415C476 366 545 362 592 393" />
        <path d="M426 447C400 500 410 550 458 588" />
        <path d="M449 417l4-4 80 59-4 5zM426 447l3-3 83 58-3 5zM451 415l78 59M428 445l81 59" />
        <path d="M534 477l21 16-4 6M512 501l-2 6 26 13 4-6M594 390l-3 5 22 16 4-6M731 172l16 12-3 5M747 185l19 15-3 5" />
        <path d="M452 584l-3 5M452 585l24 18-3 5M700 762l22 17-3 6M700 762l-3 6M831 578l-2 5 21 15 4-5" />
        <path d="M434 655l10 7-4 8M436 664l-4 6 6 5M444 662l64 46M507 706l9 7-5 9 8 5-4 7 5 3M505 708l4-5 9 8M520 725l62 44M576 767l6 7 6-7-6-7zM585 765l5-4 5 7-5 4zM589 767l64 46M648 815l5-8 8 6M652 812l-3 12 8 5M545 732l17 13M551 744h11v-8" />
        <path d="M230 947l66 45" />
        <path d="M721 780C770 812 830 803 862 758" />
        <path d="M855 597C894 628 904 680 877 721" />
        <path d="M777 652l25 18-3 5M777 652l-4 6M763 672l-4 6 24 17M804 666l74 51-3 6-74-50zM781 698l-2 5 80 56 3-5" />
        <path d="M1003 706C1044 725 1050 790 1022 830" />
        <path d="M1003 706l-58 80-4-3 56-79M1000 707l-58 78" />
      </g>

      {/* boundary sketch */}
      <path d="M1126 525L1251 616L1070 866L1023 832L1008 855L930 800z" fill="none" stroke="#a73fb2" strokeWidth="1.300" />
      <path d="M1127 530L1246 617L1069 861L1024 828" fill="none" stroke="#e8d3ea" />

      <circle cx="1083" cy="697" r="225" fill="none" stroke="#d9212b" strokeWidth="5" />
    </svg>
  );
}

const viewControls = [
  { name: "Detail Level", icon: <><path d="M1 1h14v12H1z" stroke="#333" /><path d="M2 3h12M2 7h12M2 11h12" stroke="#888" strokeDasharray="2 2" strokeWidth="2" /><path d="M4 5h10M4 9h10" stroke="#888" strokeDasharray="2 2" strokeWidth="2" /></> },
  { name: "Visual Style", icon: <path d="M1 6l4-4h10v6l-4 4H1zM1 6h10v6M11 6l4-4" fill="#fff" /> },
  { name: "Sun Path Off", icon: <><circle cx="6" cy="7" r="4" stroke="#d9962b" strokeWidth="1.600" /><path d="M6 0v2M0 7h2M1 2l2 2M10 2l-1 2" stroke="#d9962b" /><RedX x={8} y={6} s={6} /></> },
  { name: "Shadows Off", icon: <><circle cx="6" cy="5" r="4" stroke="#3568a0" /><path d="M2 12h7" stroke="#3568a0" /><RedX x={8} y={6} s={6} /></> },
  { name: "Crop View", icon: <><path d="M0 9h4M3 13V4h8M6 1v9h9" stroke="#2b6aa5" strokeWidth="1.600" /><RedX x={8} y={6} s={6} /></> },
  { name: "Show Crop Region", icon: <><path d="M0 9h4M3 13V4h6M6 1v9h4" stroke="#2b6aa5" strokeWidth="1.600" /><circle cx="12" cy="5" r="2.500" stroke="#2b6aa5" /><path d="M12 8v4" stroke="#2b6aa5" /></> },
  { name: "Temporary Hide/Isolate", icon: <><path d="M1 2h14v11H1z" fill="#cfe5f5" stroke="#245b8c" /><path d="M4 3c0 4 8 4 8 0M3 8l5 3 5-3" stroke="#222" strokeWidth="1.600" /></> },
  { name: "Reveal Hidden Elements", icon: <><circle cx="8" cy="5" r="3" fill="#e2f0fa" stroke="#2b6aa5" /><path d="M8 8v4" stroke="#2b6aa5" strokeWidth="2" /></> },
  { name: "Temporary View Properties", icon: <><path d="M1 2h10v10H1z" stroke="#aaa" strokeDasharray="2 1" /><path d="M8 6h7v7H8z" stroke="#aaa" /></> },
  { name: "Reveal Constraints", icon: <><path d="M1 0v13M15 0v7M1 3h14M4 1L1 3l3 2M12 1l3 2-3 2" stroke="#222" /><path d="M10 9h5v4h-5z" fill="#444" /><path d="M11 9V7h3v2" /></> },
];

const Chevron = ({ d }: { d: string }) => (
  <svg width="8" height="8" viewBox="0 0 8 8" fill="none" stroke="#444" strokeWidth="1.600" className="shrink-0"><path d={d} /></svg>
);

function DrawingView() {
  return (
    <main className="flex min-w-0 flex-1 flex-col border-l border-t border-[#5b6b6b]">
      <div className="flex min-h-0 flex-1">
        <div className="relative min-w-0 flex-1 border-4 border-b-[5px] border-[#2adbe4]">
          <FloorPlan />
          <div className="absolute -left-1 -top-1 h-6 bg-[#00f0ff] px-[5px] font-[Liberation_Sans] text-[15px] font-bold leading-6 text-[#0a2a3c]">
            Temporary Hide/Isolate
          </div>
          <div className="absolute right-0 top-1 flex items-center gap-[6px]">
            <button aria-label="Minimize view"><Ico w={12} h={12}><path d="M0.500 7.500h11v3h-11z" strokeWidth="1" /></Ico></button>
            <button aria-label="Restore view"><Ico w={12} h={12}><path d="M0.500 3.500h8v8h-8zM3.500 3v-2.500h8v8h-3M3.500 6.500h2v2h-2z" strokeWidth="1" /></Ico></button>
            <button aria-label="Close view"><Ico w={12} h={12}><path d="M1 1h3l2 3 2-3h3L8 6l3 5H8L6 8l-2 3H1l3-5z" strokeWidth="1" /></Ico></button>
          </div>
          <div className="absolute -right-1 top-6 flex h-[117px] w-9 flex-col items-center justify-between rounded-[5px] border-2 border-[#b9bcbc] bg-[#f2f2f2]/90 py-px">
            <button aria-label="Close navigation bar" className="self-end pr-[2px]"><Ico w={8} h={8}><circle cx="4" cy="4" r="3" stroke="#aaa" /></Ico></button>
            <button aria-label="Steering Wheels" className="flex flex-col items-center gap-[5px]">
              <span className="relative flex h-6 w-6">
                <Ico w={22} h={22}>
                  <path d="M20 12V2h-9a9 9 0 1 0 3 18" stroke="#a5a8ad" strokeWidth="1.400" />
                  <circle cx="11" cy="11" r="4.500" stroke="#a5a8ad" />
                </Ico>
                <span className="absolute -bottom-[2px] left-3 text-[10px] leading-3 text-[#4f7fc4]">2D</span>
              </span>
              <Caret color="#999" />
            </button>
            <span className="h-px w-[26px] bg-[#c4c4c4]" />
            <button aria-label="Zoom in Region" className="flex flex-col items-center gap-[9px]">
              <Ico w={17} h={17}><path d="M1 1h11v11H1z" fill="#b4d8a6" stroke="#7fb16c" /><circle cx="11" cy="11" r="3.500" fill="#fff" stroke="#8a8a8a" /><path d="M13 13l4 4" stroke="#8a8a8a" /></Ico>
              <Caret color="#999" />
            </button>
            <button aria-label="Navigation options" className="self-end pr-[2px]"><Ico w={8} h={8}><circle cx="4" cy="4" r="3" stroke="#aaa" /><path d="M2 4h4" stroke="#aaa" /></Ico></button>
          </div>
          <div role="tooltip" className="absolute left-[1086px] top-[610px] border border-[#767676] bg-white px-[6px] text-[11px] leading-[18px] text-[#555] shadow-[3px_3px_1px_#8a8a8a]">
            Click to enter line start point.
          </div>
        </div>
        <div className="flex w-4 flex-col items-center bg-[#f0f0f0] py-[5px]">
          <Chevron d="M1 6l3-4 3 4" />
          <div className="flex flex-1 flex-col items-center">
            <span className="grow" />
            <span className="h-4 w-4 bg-[#cdcdcd]" />
            <span className="grow" />
          </div>
          <Chevron d="M1 2l3 4 3-4" />
        </div>
      </div>
      <div className="flex h-[19px] shrink-0 items-center bg-[#f0f0f0] pb-[2px] pl-6 text-[12px]">
        <span className="w-[55px] text-[11px]">1 : 100</span>
        <div className="flex items-center gap-[5px]">
          {viewControls.map((v) => (
            <button key={v.name} aria-label={v.name}><Ico w={16} h={14}>{v.icon}</Ico></button>
          ))}
        </div>
        <span className="ml-[7px]"><Chevron d="M6 1L2 4l4 3" /></span>
        <div className="flex h-4 flex-1 justify-center">
          <span className="w-[17px] bg-[#cdcdcd]" />
        </div>
        <Chevron d="M2 1l4 3-4 3" />
        <span className="flex w-5 justify-end pr-[3px]">
          <Ico w={9} h={9}><path d="M7 1h2M4 4h2M7 4h2M1 7h2M4 7h2M7 7h2" stroke="#bbb" strokeWidth="2" /></Ico>
        </span>
      </div>
    </main>
  );
}

// ---------- project browser ----------

type CellKind = "blank" | "line" | "tee" | "end" | "open" | "closed";

function Cell({ kind }: { kind: CellKind }) {
  const box = kind === "open" || kind === "closed";
  return (
    <svg width="20" height="18" viewBox="0 0 20 18" fill="none" stroke="#8f8f8f" className="shrink-0 overflow-visible">
      {kind !== "blank" && <path d={kind === "end" ? "M9.500 0v10" : "M9.500 0v18"} strokeDasharray="1 1" />}
      {kind !== "blank" && kind !== "line" && <path d="M9 9.500h14" strokeDasharray="1 1" />}
      {box && <path d="M5.500 5.500h8v8h-8z" fill="#fff" stroke="#8c8c8c" />}
      {box && <path d={kind === "open" ? "M7 9.500h5" : "M7 9.500h5M9.500 7v5"} stroke="#3c4c78" />}
    </svg>
  );
}

const treeIcons: Record<string, ReactNode> = {
  views: <path d="M4 1H1v3M12 1h3v3M1 10v3h3M15 10v3h-3M4 6l3-2h5l-1 5-3 2H4z" />,
  legends: <><path d="M0.500 1.500h15v11h-15z" fill="#e8e8e8" /><path d="M1 3h14" strokeWidth="2" /><path d="M3 6h3v2H3zM3 10h3M8 6h6M8 8h6M8 10h6" strokeWidth="1" /></>,
  schedules: <><path d="M0.500 1.500h15v11h-15z" fill="#f2f2f2" /><path d="M1 3h14" strokeWidth="2" /><path d="M1 7h14M1 10h14M5 4v9M10 4v9" strokeWidth="1" /></>,
  sheets: <path d="M1 1h10l4 3v9H1zM11 1v3h4M3 11V5h4v3h4v3z" fill="#f4f4f4" strokeWidth="1" />,
  families: <path d="M1 1h5v7H1zM8 1h7v10H5M8 4h4v4H8M1 11h5v2" />,
  groups: <><path d="M4 1H1v12h3M12 1h3v12h-3" /><circle cx="7" cy="6" r="3" /><path d="M7 6h5v5H8z" fill="#ccc" /></>,
  links: (
    <>
      <rect x="1" y="5" width="7" height="5" rx="2.500" stroke="#d0a010" strokeWidth="2" />
      <rect x="8" y="5" width="7" height="5" rx="2.500" stroke="#d0a010" strokeWidth="2" />
      <path d="M5 7.500h6" stroke="#8f6c00" strokeWidth="1.600" />
    </>
  ),
};

type Row = { text: string; cells: CellKind[]; icon?: string; bold?: boolean; selected?: boolean };

const leaves = (names: string[], outer: CellKind[]): Row[] =>
  names.map((text, i) => ({
    text,
    cells: [...outer, i === names.length - 1 ? "end" : "tee"],
    bold: text === "Piso 2" && names.includes("Terreno"),
  }));

const rows: Row[] = [
  { text: "Views (todas)", cells: ["open"], icon: "views", selected: true },
  { text: "Floor Plans (Planta de piso)", cells: ["line", "open"] },
  ...leaves(["Piso 1", "Piso 1 Copy 1", "Piso 2", "Piso 3", "Piso 4", "Piso 5", "Terreno"], ["line", "line"]),
  { text: "Ceiling Plans (Planta de forro)", cells: ["line", "open"] },
  ...leaves(["Piso 1", "Piso 2", "Piso 3", "Piso 4", "Piso 5"], ["line", "line"]),
  { text: "3D Views (Vista 3D)", cells: ["line", "open"] },
  ...leaves(["3D View 1", "3D View 2", "{3D}"], ["line", "line"]),
  { text: "Elevations (Elevação da construç", cells: ["line", "open"] },
  ...leaves(["Este", "Norte", "Oeste", "Sul"], ["line", "line"]),
  { text: "Sections (Corte da construção)", cells: ["line", "open"] },
  ...leaves(["Corte 0", "Corte 1", "Corte 3"], ["line", "blank"]),
  { text: "Legends", cells: ["tee"], icon: "legends" },
  { text: "Schedules/Quantities", cells: ["open"], icon: "schedules" },
  ...leaves(
    ["Tabela das Grades e Corrimãos", "Tabela das Janelas", "Tabela das lajes", "Tabela das paredes", "Tabela das portas", "Tabela de quantidade dos materi", "Tabela de quantidade dos materi"],
    ["line"]
  ),
  { text: "Sheets (todas)", cells: ["tee"], icon: "sheets" },
  { text: "Families", cells: ["closed"], icon: "families" },
  { text: "Groups", cells: ["open"], icon: "groups" },
  { text: "Detail", cells: ["line", "tee"] },
  { text: "Model", cells: ["line", "closed"] },
  { text: "Revit Links", cells: ["end"], icon: "links" },
];

function ProjectBrowser() {
  return (
    <aside className="flex w-[220px] shrink-0 flex-col text-[11px]">
      <h2 className="flex h-[18px] items-center justify-between bg-[#bfcbda] pl-1 pr-[6px] text-[#222]">
        Project Browser - AC019 - Arq 02
        <button aria-label="Close browser"><Ico w={8} h={8}><path d="M0 0l8 8M8 0L0 8" stroke="#000" strokeWidth="1.600" /></Ico></button>
      </h2>
      <ul className="mt-[2px] min-h-0 flex-1 overflow-hidden border-l border-t border-[#6e6e6e] bg-white">
        {rows.map((r, i) => (
          <li key={i} className="flex h-[18px] items-center text-[#1b1b1b]">
            {r.cells.map((c, j) => <Cell key={j} kind={c} />)}
            {r.icon && <span className="z-10 flex w-5 justify-center bg-white"><Ico w={16} h={14}>{treeIcons[r.icon]}</Ico></span>}
            <span className={`whitespace-nowrap ${r.icon ? "px-[3px]" : "pl-[7px]"} ${r.selected ? "bg-[#e3e3e3]" : ""} ${r.bold ? "font-bold" : ""}`}>{r.text}</span>
          </li>
        ))}
      </ul>
      <div className="flex h-[19px] items-center border-l border-[#6e6e6e] bg-[#f0f0f0] px-[6px]">
        <Chevron d="M6 1L2 4l4 3" />
        <span className="ml-[4px] h-4 w-[131px] bg-[#cdcdcd]" />
        <span className="ml-auto"><Chevron d="M2 1l4 3-4 3" /></span>
      </div>
    </aside>
  );
}

// ---------- status bar ----------

const selectTools = [
  { name: "Select links", icon: <><path d="M1 3h6v4H1zM8 3h6v4H8z" stroke="#d0a010" strokeWidth="2" /><Cursor x={6} y={3} /></> },
  { name: "Select underlay elements", icon: <><path d="M1 12l7-9M1 12h8M3 8h6" stroke="#2b73b5" /><RedX x={9} y={1} s={5} /><Cursor x={8} y={4} /></> },
  { name: "Select pinned elements", icon: <><path d="M2 2h8v3H9v3h2v2H2V8h1V5H2z" fill="#f0a050" stroke="#a85f16" /><Cursor x={8} y={4} /></> },
  { name: "Select elements by face", icon: <><path d="M2 4l6-2v10H2z" fill="#cfe8fa" stroke="#2b73b5" /><RedX x={9} y={1} s={5} /><Cursor x={8} y={4} /></> },
  { name: "Drag elements on selection", icon: <><path d="M5 0v10M0 5h10M3 2l2-2 2 2M3 8l2 2 2-2" stroke="#222" /><Cursor x={7} y={4} /></> },
];

function StatusBar() {
  return (
    <footer className="flex h-[21px] shrink-0 items-center border-t border-[#8b8b8b] bg-linear-to-b from-[#e6e6e6] to-[#cbcbcb] pt-px text-[12px] text-[#1b1b1b]">
      <span className="flex-1 pl-[2px]">Click to enter line start point.</span>
      <span className="flex w-[28px] justify-center">
        <Ico w={16} h={16}><path d="M1 15V8h4v7M8 15V5h5v10M3 5l2-3 3 2 2-3 3 3" fill="#bbb" stroke="#888" /></Ico>
      </span>
      <div className="relative">
        <select aria-label="Active workset" className="h-[19px] w-[204px] appearance-none bg-white"><option></option></select>
        <svg width="7" height="5" viewBox="0 0 7 5" className="pointer-events-none absolute right-[4px] top-[9px]" fill="none" stroke="#999"><path d="M0 0.500l3.500 3.500L7 0.500" /></svg>
      </div>
      <button aria-label="Editable only" className="flex w-[44px] items-center justify-end gap-[5px] pr-[4px]">
        <Ico w={14} h={16}><path d="M3 2h9l-3 5v3H6L3 14H1" fill="#e2e2e2" stroke="#999" /></Ico>
        :0
      </button>
      <span className="flex w-[67px] items-center justify-end gap-[9px] pr-[8px]">
        <span className="h-4 w-4 rounded-[3px] bg-[#9a9a9a]" />
        <Ico w={16} h={16}><path d="M1 1h14v14H1z" fill="#b9b9b9" stroke="none" /><path d="M7 3v10l6-1-3-3z" fill="#fff" stroke="#777" /></Ico>
      </span>
      <div className="relative">
        <select aria-label="Design option" className="h-[19px] w-[155px] appearance-none bg-white pl-[3px] text-[#8b8b8b]"><option>Main Model</option></select>
        <svg width="7" height="5" viewBox="0 0 7 5" className="pointer-events-none absolute right-[4px] top-[9px]" fill="none" stroke="#999"><path d="M0 0.500l3.500 3.500L7 0.500" /></svg>
      </div>
      <div className="flex w-[445px] items-center justify-end gap-[9px] pr-[65px]">
        {selectTools.map((s) => (
          <button key={s.name} aria-label={s.name}><Ico w={17} h={17}>{s.icon}</Ico></button>
        ))}
        <button className="flex items-center" aria-label="Filter">
          <Ico w={16} h={16}><path d="M1 2h14L9.500 8v7L6.500 12V8z" fill="#dfe7ee" /></Ico>
          :0
        </button>
      </div>
    </footer>
  );
}

export default function App() {
  return (
    <div className="relative flex h-screen min-h-[700px] flex-col bg-[#f0f0f0] font-['Open_Sans','Noto_Sans',sans-serif]">
      <TitleBar />
      <TabBar />
      <AppMenu />
      <Ribbon />
      <OptionsBar />
      <div className="flex min-h-0 flex-1 gap-[7px]">
        <Properties />
        <DrawingView />
        <ProjectBrowser />
      </div>
      <StatusBar />
      <div className="h-[43px] shrink-0 border-l border-black bg-white" />
    </div>
  );
}
